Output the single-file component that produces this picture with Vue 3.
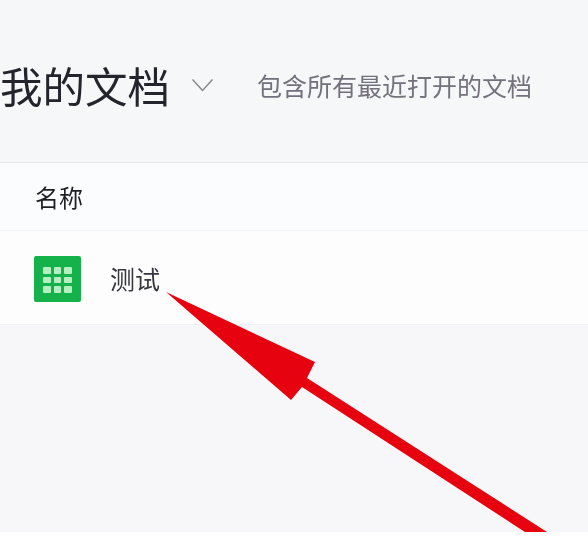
<script setup>
const title = '我的文档'
const subtitle = '包含所有最近打开的文档'
const cells = Array.from({ length: 9 })
</script>

<template>
  <div class="page">
    <header class="head">
      <h1 class="title">{{ title }}</h1>
      <svg class="chevron" viewBox="0 0 23 14" width="23" height="14" aria-hidden="true">
        <path d="M1.5 1.5 L11.5 12.5 L21.5 1.5" fill="none" stroke="#85868d" stroke-width="1.4" />
      </svg>
      <p class="subtitle">{{ subtitle }}</p>
    </header>
    <div class="col-head"><span class="col-name">名称</span></div>
    <div class="row">
      <div class="file-icon">
        <span v-for="(c, i) in cells" :key="i" class="cell"></span>
      </div>
      <span class="file-name">测试</span>
    </div>
    <div class="rest"></div>
    <div class="foot"></div>
    <svg class="arrow" viewBox="0 0 588 538" width="588" height="538" aria-hidden="true">
      <path d="M166 292 L315 362 L307 378 L547 532 L525 532 L302 387 L291 400 Z" fill="#e6030f" />
    </svg>
  </div>
</template>

<style>
html, body { margin: 0; background: #fff; }
</style>

<style scoped>
.page {
  position: relative;
  width: 588px;
  height: 538px;
  overflow: hidden;
  display: flex;
  flex-direction: column;
  font-family: "Noto Sans CJK SC", "Liberation Sans", sans-serif;
  background: #f7f7f9;
}
.head {
  height: 163px;
  box-sizing: border-box;
  flex: none;
  display: flex;
  align-items: center;
  padding: 7px 0 0 0;
  background: #f6f7f9;
  border-bottom: 1px solid #e6e7ea;
}
.title {
  margin: 0;
  font-size: 42.5px;
  font-weight: 400;
  line-height: 50px;
  color: #25232b;
  filter: blur(0.5px);
  white-space: nowrap;
}
.chevron { margin-left: 21px; flex: none; }
.subtitle {
  margin: 0 0 0 43px;
  font-size: 25px;
  line-height: 30px;
  color: #74717c;
  filter: blur(0.7px);
  white-space: nowrap;
}
.col-head {
  height: 68px;
  box-sizing: border-box;
  flex: none;
  display: flex;
  align-items: center;
  padding-left: 35px;
  background: #fbfcfd;
  border-bottom: 1px solid #f3f4f6;
}
.col-name {
  font-size: 24px;
  color: #1f1e24;
  filter: blur(0.6px);
}
.row {
  height: 94px;
  box-sizing: border-box;
  flex: none;
  display: flex;
  align-items: center;
  padding-left: 34px;
  background: #fdfdfe;
  border-bottom: 1px solid #eff0f2;
}
.file-icon {
  width: 47px;
  height: 46px;
  margin-top: 3px;
  flex: none;
  box-sizing: border-box;
  padding: 11px 9px 9px;
  border-radius: 2px;
  background: #15b24c;
  display: grid;
  grid-template-columns: repeat(3, 1fr);
  grid-template-rows: repeat(3, 1fr);
  gap: 3px;
  filter: blur(0.5px);
}
.cell { background: #b5efbf; border-radius: 1px; }
.file-name {
  margin-left: 29px;
  font-size: 25px;
  color: #38363e;
  filter: blur(0.7px);
}
.rest { flex: 1; background: #f7f7f9; }
.foot { height: 6px; flex: none; background: #ffffff; }
.arrow { position: absolute; left: 0; top: 0; filter: blur(0.4px); }
</style>
